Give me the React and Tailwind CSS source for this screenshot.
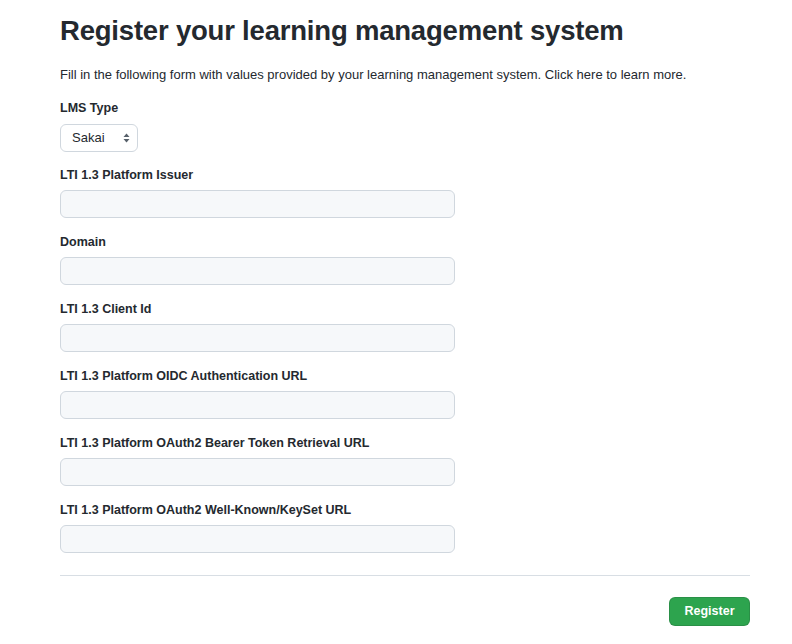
import React, { useState } from 'react'

const fields = [
  'LTI 1.3 Platform Issuer',
  'Domain',
  'LTI 1.3 Client Id',
  'LTI 1.3 Platform OIDC Authentication URL',
  'LTI 1.3 Platform OAuth2 Bearer Token Retrieval URL',
  'LTI 1.3 Platform OAuth2 Well-Known/KeySet URL',
]

const App = () => {
  const [lms, setLms] = useState('Sakai')

  return (
    <div className='min-h-screen bg-white text-[#24292f] font-["Liberation_Sans",Arial,sans-serif]'>
      <div className='w-[690px] ml-[60px] pt-[15px]'>
        <h1 className='text-[27.5px] leading-[32px] font-bold tracking-[-0.2px]'>
          Register your learning management system
        </h1>

        <p className='mt-[19px] text-[13px] leading-[18px]'>
          Fill in the following form with values provided by your learning management system. Click here to learn more.
        </p>

        <div className='mt-[15px] flex flex-col'>
          <label className='text-[12.5px] leading-[18px] font-bold'>LMS Type</label>
          <div className='mt-[7px] relative w-[78px]'>
            <select
              value={lms}
              onChange={e => setLms(e.target.value)}
              className='appearance-none w-full h-[28px] pl-[11px] pr-6 text-[13px] bg-white border border-[#d0d7de] rounded-[6px]'
            >
              <option>Sakai</option>
              <option>Canvas</option>
              <option>Moodle</option>
            </select>
            <svg className='absolute right-[8px] top-[9px] pointer-events-none' width='7' height='10' viewBox='0 0 7 10'>
              <path d='M3.5 0.5 L6.5 4 L0.5 4 Z' fill='#57606a' />
              <path d='M3.5 9.5 L6.5 6 L0.5 6 Z' fill='#57606a' />
            </svg>
          </div>
        </div>

        {fields.map((f, i) => (
          <div key={f} className={i === 0 ? 'mt-[14px] flex flex-col' : 'mt-[15px] flex flex-col'}>
            <label className='text-[12.5px] leading-[18px] font-bold'>{f}</label>
            <input
              type='text'
              className='mt-[6px] w-[395px] h-[28px] bg-[#f6f8fa] border border-[#d0d7de] rounded-[6px] px-3 text-[13px] outline-none focus:border-[#0969da]'
            />
          </div>
        ))}

        <hr className='mt-[22px] border-t border-[#d8dee4]' />

        <div className='mt-[21px] flex justify-end'>
          <button className='h-[29px] w-[81px] bg-[#2da44e] text-white text-[12.5px] font-bold rounded-[6px] border border-[rgba(27,31,36,0.15)] hover:bg-[#2c974b]'>
            Register
          </button>
        </div>
      </div>
    </div>
  )
}

export default App
